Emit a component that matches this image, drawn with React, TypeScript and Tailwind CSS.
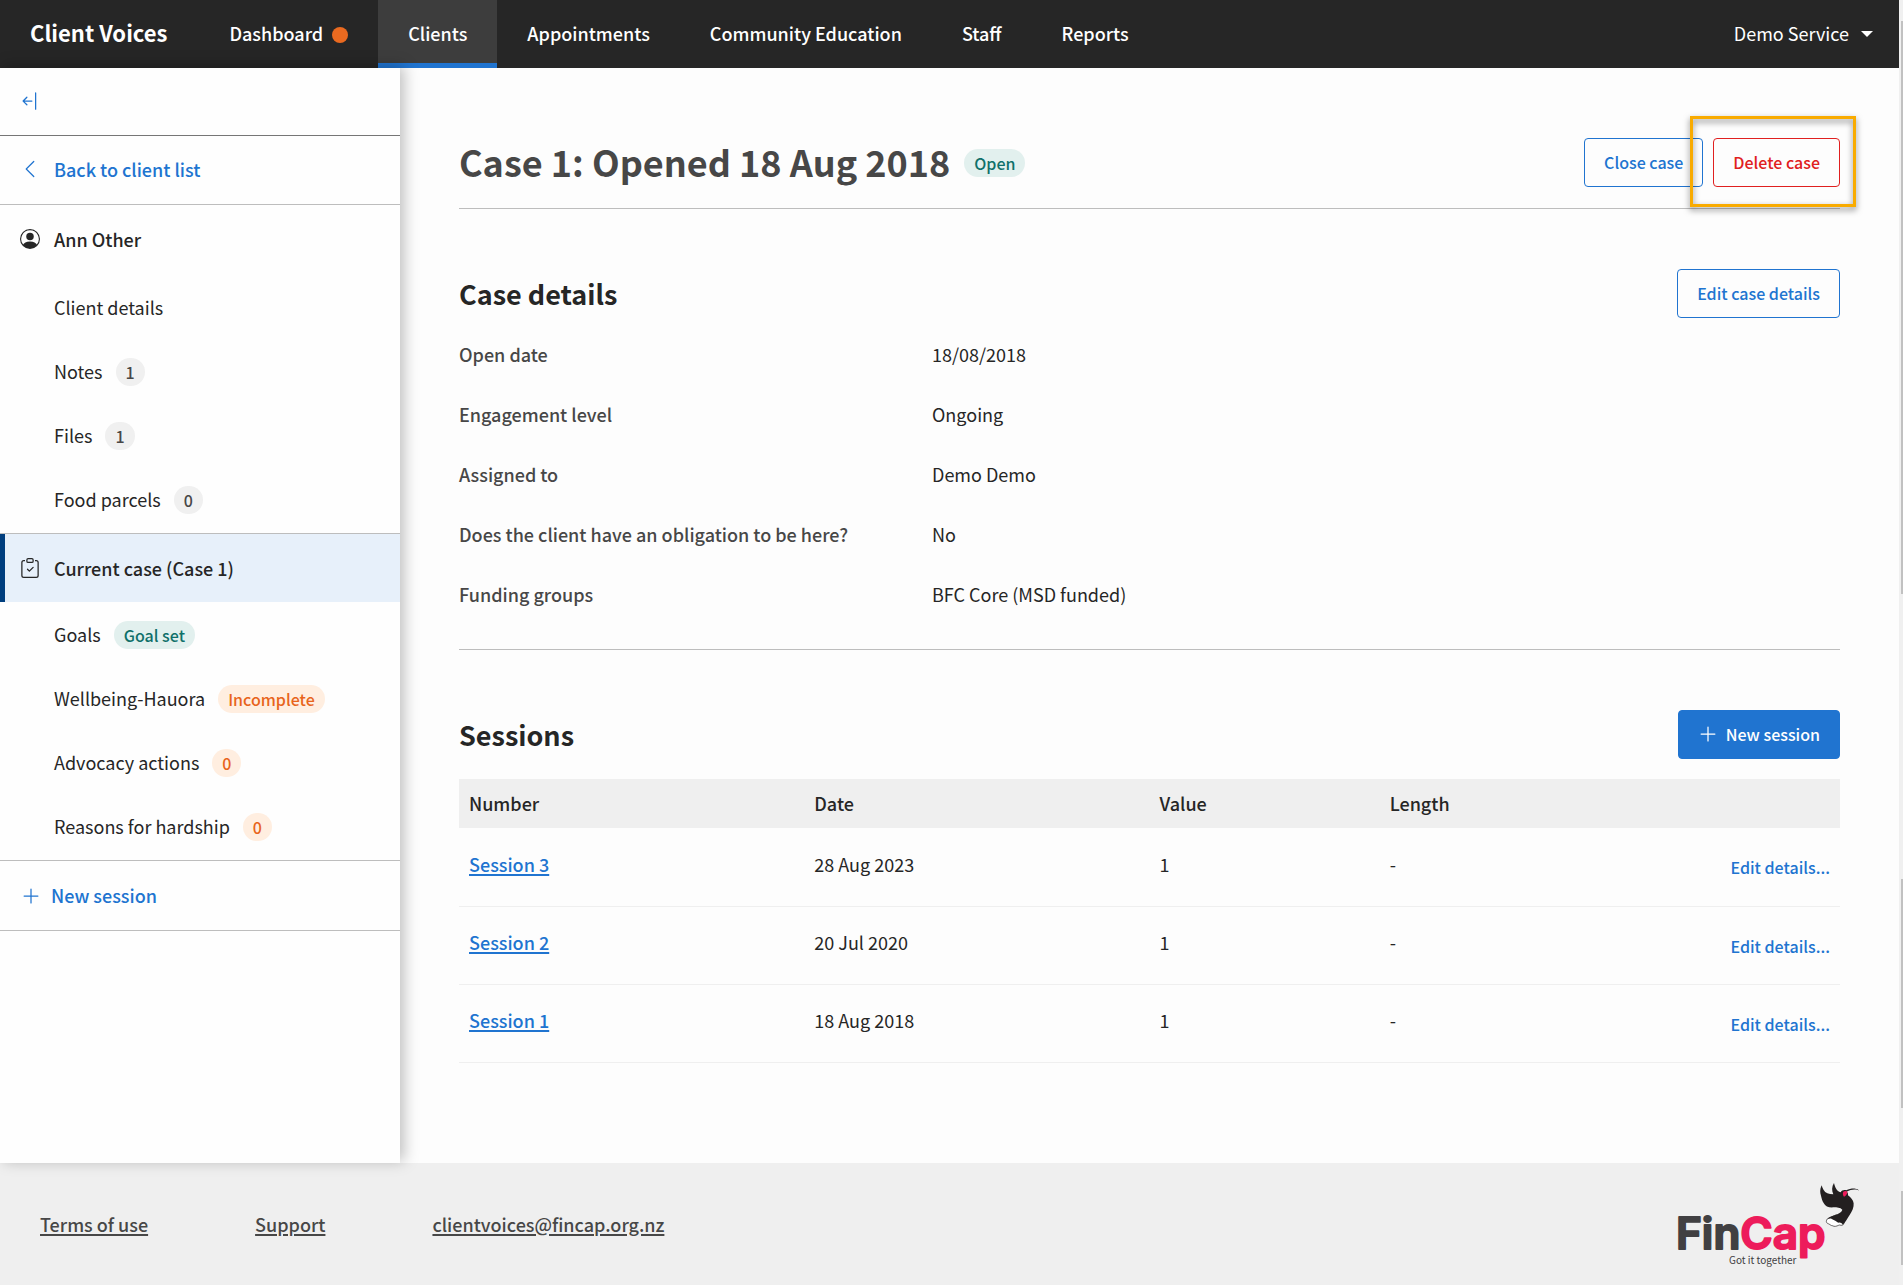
import React from "react";
import {
  BsArrowBarLeft,
  BsChevronLeft,
  BsClipboardCheck,
  BsPersonCircle,
  BsPlusLg,
} from "react-icons/bs";

type Tone = "grey" | "green" | "orange";

const toneClasses: Record<Tone, string> = {
  grey: "bg-[#f0f0f0] text-[#474747]",
  green: "bg-[#e2f0ee] text-[#10706a]",
  orange: "bg-[#ffeee0] text-[#e8641b]",
};

const Badge: React.FC<{ tone: Tone; children: React.ReactNode }> = ({
  tone,
  children,
}) => (
  <span
    className={`inline-flex h-7 items-center rounded-full px-[10px] text-[16px] leading-6 font-medium ${toneClasses[tone]}`}
  >
    {children}
  </span>
);

const navItems = [
  { label: "Dashboard", alert: true },
  { label: "Clients", active: true },
  { label: "Appointments" },
  { label: "Community Education" },
  { label: "Staff" },
  { label: "Reports" },
];

const Header: React.FC = () => (
  <header className="flex h-[68px] items-stretch bg-[#262626] text-white">
    <a
      href="#"
      className="flex items-center pr-8 pb-1 pl-[30px] text-[22px] leading-8 font-bold"
    >
      Client Voices
    </a>
    <nav className="flex flex-1 items-stretch">
      {navItems.map((item) => (
        <a
          key={item.label}
          href="#"
          className={`flex items-center gap-[9px] border-y-5 border-t-transparent px-[30px] font-medium ${
            item.active
              ? "border-b-[#2074d0] bg-[#3d3d3d]"
              : "border-b-transparent"
          }`}
        >
          <span className="pb-0.5">{item.label}</span>
          {item.alert && (
            <span className="mt-0.5 h-4 w-4 rounded-full bg-[#ea6a20]" />
          )}
        </a>
      ))}
    </nav>
    <button type="button" className="flex items-center gap-3 px-[26px]">
      <span className="pb-0.5">Demo Service</span>
      <svg width="12" height="6" viewBox="0 0 12 6" fill="currentColor">
        <path d="M0 0h12L6 6z" />
      </svg>
    </button>
  </header>
);

interface MenuItem {
  label: string;
  badge?: string;
  tone?: Tone;
}

const clientMenu: MenuItem[] = [
  { label: "Client details" },
  { label: "Notes", badge: "1", tone: "grey" },
  { label: "Files", badge: "1", tone: "grey" },
  { label: "Food parcels", badge: "0", tone: "grey" },
];

const caseMenu: MenuItem[] = [
  { label: "Goals", badge: "Goal set", tone: "green" },
  { label: "Wellbeing-Hauora", badge: "Incomplete", tone: "orange" },
  { label: "Advocacy actions", badge: "0", tone: "orange" },
  { label: "Reasons for hardship", badge: "0", tone: "orange" },
];

const Menu: React.FC<{ items: MenuItem[] }> = ({ items }) => (
  <ul className="border-b border-[#bdbdbd] py-px">
    {items.map((item) => (
      <li key={item.label}>
        <a href="#" className="flex h-16 items-center gap-[13px] pl-[54px]">
          <span className="pb-0.5">{item.label}</span>
          {item.badge && (
            <Badge tone={item.tone ?? "grey"}>{item.badge}</Badge>
          )}
        </a>
      </li>
    ))}
  </ul>
);

const Sidebar: React.FC = () => (
  <aside className="relative w-[400px] shrink-0 bg-[#fefefe] shadow-[4px_-2px_14px_rgba(0,0,0,0.25)]">
    <div className="flex h-[68px] items-center border-b border-[#767676] px-5 pb-0.5">
      <button type="button" aria-label="Collapse menu">
        <BsArrowBarLeft className="h-5 w-5 text-[#2074d0]" />
      </button>
    </div>
    <a
      href="#"
      className="flex h-[69px] items-center gap-[14px] border-b border-[#bdbdbd] px-5 pb-0.5 font-medium text-[#2074d0]"
    >
      <BsChevronLeft className="h-5 w-5" />
      Back to client list
    </a>
    <a
      href="#"
      className="flex h-[70px] items-center gap-[14px] px-5 pb-0.5 font-medium"
    >
      <BsPersonCircle className="h-5 w-5" />
      Ann Other
    </a>
    <Menu items={clientMenu} />
    <a
      href="#"
      className="flex h-[68px] items-center gap-[14px] border-l-5 border-[#003e7e] bg-[#e7f0fa] pl-[15px] font-medium"
    >
      <BsClipboardCheck className="h-5 w-5" />
      Current case (Case 1)
    </a>
    <Menu items={caseMenu} />
    <a
      href="#"
      className="flex h-[70px] items-center gap-[10px] border-b border-[#bdbdbd] px-[21px] font-medium text-[#2074d0]"
    >
      <BsPlusLg className="h-5 w-5" />
      New session
    </a>
  </aside>
);

const buttonBase =
  "flex h-[49px] items-center rounded border px-[19px] pb-0.5 text-[16px] leading-6 font-medium";

const details = [
  ["Open date", "18/08/2018"],
  ["Engagement level", "Ongoing"],
  ["Assigned to", "Demo Demo"],
  ["Does the client have an obligation to be here?", "No"],
  ["Funding groups", "BFC Core (MSD funded)"],
];

const sessions = [
  { name: "Session 3", date: "28 Aug 2023", value: 1 },
  { name: "Session 2", date: "20 Jul 2020", value: 1 },
  { name: "Session 1", date: "18 Aug 2018", value: 1 },
];

const CasePage: React.FC = () => (
  <main className="min-w-0 flex-1 px-[59px] pt-[70px] pb-[100px]">
    <div className="flex items-center gap-[14px] border-b border-[#bdbdbd] pb-[21px]">
      <h1 className="pb-0.5 text-[36px] leading-[47px] font-bold text-[#474747]">
        Case 1: Opened 18 Aug 2018
      </h1>
      <Badge tone="green">Open</Badge>
      <div className="ml-auto flex gap-[10px]">
        <button
          type="button"
          className={`${buttonBase} border-[#2074d0] text-[#2074d0]`}
        >
          Close case
        </button>
        <div className="relative">
          <button
            type="button"
            className={`${buttonBase} border-[#e02020] text-[#e02020]`}
          >
            Delete case
          </button>
          <div className="pointer-events-none absolute -top-[22px] -right-4 -bottom-5 -left-[23px] border-3 border-[#f9ab00] drop-shadow-[0_3px_3px_rgba(0,0,0,0.5)]" />
        </div>
      </div>
    </div>

    {/* Case details */}
    <section className="border-b border-[#bdbdbd] pt-[60px] pb-6">
      <div className="mb-[7px] flex items-center justify-between">
        <h2 className="text-[27px] leading-9 font-bold">Case details</h2>
        <button
          type="button"
          className={`${buttonBase} border-[#2074d0] text-[#2074d0]`}
        >
          Edit case details
        </button>
      </div>
      <dl>
        {details.map(([label, value]) => (
          <div
            key={label}
            className="grid h-[60px] grid-cols-3 items-center gap-[38px] pb-0.5"
          >
            <dt className="font-medium text-[#474747]">{label}</dt>
            <dd className="col-span-2">{value}</dd>
          </div>
        ))}
      </dl>
    </section>

    {/* Sessions */}
    <section className="pt-[60px]">
      <div className="mb-5 flex items-center justify-between">
        <h2 className="text-[27px] leading-9 font-bold">Sessions</h2>
        <button
          type="button"
          className={`${buttonBase} gap-2 border-[#2074d0] bg-[#2074d0] text-white`}
        >
          <BsPlusLg className="h-5 w-5" />
          New session
        </button>
      </div>
      <table className="w-full table-fixed text-left">
        <thead>
          <tr className="h-[49px] bg-[#efefef]">
            <th className="w-3/12 px-[10px] font-medium">Number</th>
            <th className="w-3/12 px-[10px] font-medium">Date</th>
            <th className="w-2/12 px-[10px] font-medium">Value</th>
            <th className="w-2/12 px-[10px] font-medium">Length</th>
            <th className="w-2/12 px-[10px]" />
          </tr>
        </thead>
        <tbody>
          {sessions.map((session) => (
            <tr key={session.name} className="h-[78px] border-b border-[#efefef]">
              <td className="px-[10px] pb-[5px]">
                <a
                  href="#"
                  className="font-medium text-[#2074d0] underline decoration-2 underline-offset-2"
                >
                  {session.name}
                </a>
              </td>
              <td className="px-[10px] pb-[5px]">{session.date}</td>
              <td className="px-[10px] pb-[5px]">{session.value}</td>
              <td className="px-[10px] pb-[5px]">-</td>
              <td className="px-[10px] text-right">
                <button
                  type="button"
                  className="text-[16px] leading-6 font-medium text-[#2074d0]"
                >
                  Edit details...
                </button>
              </td>
            </tr>
          ))}
        </tbody>
      </table>
    </section>
  </main>
);

const Logo: React.FC = () => (
  <svg width="184" height="87" viewBox="0 0 184 87" role="img" aria-label="FinCap">
    <text
      x="1"
      y="68"
      className="font-['Inter',sans-serif] text-[44px] font-semibold"
      strokeWidth="2"
      strokeLinejoin="round"
    >
      <tspan fill="#414042" stroke="#414042">
        Fin
      </tspan>
      <tspan fill="#ed1c5b" stroke="#ed1c5b">
        Cap
      </tspan>
    </text>
    <text x="54" y="83" fill="#414042" className="text-[10px]">
      Got it together
    </text>
    {/* Bird */}
    <g transform="translate(-35 -20) scale(0.3333)">
      <path
        d="M562 174c-6 8-2 14 6 15 3 6 10 4 14 7 7 1 12-3 17-4 5 2 10 1 12-3l4-14-26-14z"
        fill="#ffffff"
        stroke="#231f20"
        strokeWidth="2"
      />
      <path
        d="M545 73c-6 13-5 22-2 31 2 8 4 16 8 22 5 11 16 14 30 13 10 0 20 1 26 7-2 9-14 14-28 18-9 3-14 5-17 10 10-3 14 0 19 3 8 2 9 7 15 8 5-1 9 1 13 6 9-9 14-20 20-29 8-11 13-23 12-35-1-10-8-17-17-24 1-5-1-9-4-11 12-6 22-8 34-5l2 3c0-5-4-7-10-7-9-1-19 1-27 5-7-2-14 0-17 6-12-4-17-15-20-28-7 10-7 24-2 34-14-1-24-4-29-13-3-5-5-9-6-14z"
        fill="#231f20"
      />
      <path d="M610 92c4-3 9-3 12 0 0 7-4 12-10 15-4-4-4-11-2-15z" fill="#ed1c5b" />
    </g>
  </svg>
);

const footerLinks = ["Terms of use", "Support", "clientvoices@fincap.org.nz"];

const Footer: React.FC = () => (
  <footer className="flex h-[123px] items-center justify-between bg-[#efefef] px-10">
    <div className="flex gap-[107px]">
      {footerLinks.map((link) => (
        <a
          key={link}
          href="#"
          className="font-medium text-[#474747] underline decoration-2 underline-offset-2"
        >
          {link}
        </a>
      ))}
    </div>
    <Logo />
  </footer>
);

const ScrollTrack: React.FC = () => (
  <div className="flex w-1 shrink-0 flex-col items-end bg-[#f0f0f0]">
    <div className="grow-[21]" />
    <div className="w-0.5 grow-[573] bg-[#c1c1c1]" />
    <div className="grow-[285]" />
    <div className="w-0.5 grow-[229] bg-[#c1c1c1]" />
    <div className="grow-[83]" />
    <div className="w-0.5 grow-[73] bg-[#c1c1c1]" />
    <div className="grow-[21]" />
  </div>
);

const App: React.FC = () => {
  return (
    <div className="flex min-h-screen bg-[#fdfdfd] font-['Noto_Sans_CJK_SC','Noto_Sans',sans-serif] text-[18px] leading-[27px] text-[#262626]">
      <div className="flex min-w-0 flex-1 flex-col">
        <Header />
        <div className="flex flex-1">
          <Sidebar />
          <CasePage />
        </div>
        <Footer />
      </div>
      <ScrollTrack />
    </div>
  );
};

export default App;
